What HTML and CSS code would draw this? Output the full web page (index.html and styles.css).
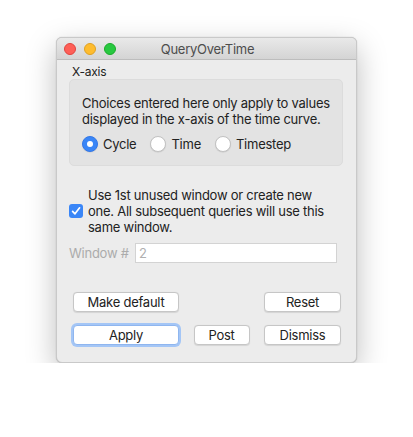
FILE: index.html
```html
<!DOCTYPE html>
<html>
<head>
<meta charset="utf-8">
<link rel="stylesheet" href="styles.css">
</head>
<body>
<div class="window">
  <div class="titlebar">
    <div class="lights">
      <span class="light red"></span>
      <span class="light yellow"></span>
      <span class="light green"></span>
    </div>
    <div class="title">QueryOverTime</div>
  </div>
  <div class="content">
    <div class="grouplabel">X-axis</div>
    <div class="group">
      <div class="desc">Choices entered here only apply to values displayed in the x-axis of the time curve.</div>
      <div class="radios">
        <label class="radio"><span class="rb checked"></span><span>Cycle</span></label>
        <label class="radio"><span class="rb"></span><span>Time</span></label>
        <label class="radio"><span class="rb"></span><span>Timestep</span></label>
      </div>
    </div>
    <div class="checkrow">
      <span class="cb"><svg width="10" height="10" viewBox="0 0 10 10"><path d="M1.6 5.3 L4 7.8 L8.6 1.8" fill="none" stroke="#fff" stroke-width="1.7" stroke-linecap="round" stroke-linejoin="round"/></svg></span>
      <div class="checktext">Use 1st unused window or create new one. All subsequent queries will use this same window.</div>
    </div>
    <div class="winrow">
      <span class="winlabel">Window #</span>
      <div class="input">2</div>
    </div>
    <div class="btnrow first">
      <div class="btn w106">Make default</div>
      <div class="btn w77">Reset</div>
    </div>
    <div class="btnrow second">
      <div class="btn w106 focus">Apply</div>
      <div class="btn w56">Post</div>
      <div class="btn w77">Dismiss</div>
    </div>
  </div>
</div>
</body>
</html>
```

FILE: styles.css
```css
html, body {
  margin: 0;
  padding: 0;
  background: #ffffff;
}
body {
  font-family: Inter, "Noto Sans", sans-serif;
  font-size: 13px;
  letter-spacing: -0.25px;
  color: #262626;
  padding: 37px 0 0 56px;
}
.window {
  width: 301px;
  height: 326px;
  box-sizing: border-box;
  border-radius: 6px;
  border: 1px solid #c9c9c9;
  background: #ececec;
  box-shadow: 0 10px 30px rgba(0,0,0,0.26), 0 0 1px rgba(0,0,0,0.3);
  overflow: hidden;
  display: flex;
  flex-direction: column;
}
.titlebar {
  height: 21px;
  flex: none;
  background: linear-gradient(#e9e9e9, #d4d4d4);
  border-bottom: 1px solid #bdbdbd;
  display: flex;
  align-items: center;
  position: relative;
}
.lights {
  display: flex;
  gap: 8px;
  padding-left: 7px;
}
.light {
  width: 12px;
  height: 12px;
  border-radius: 50%;
  box-sizing: border-box;
}
.red { background: #fe5f57; border: 0.5px solid #e0443e; }
.yellow { background: #febc2e; border: 0.5px solid #dea123; }
.green { background: #28c840; border: 0.5px solid #1aab29; }
.title {
  position: absolute;
  left: 0;
  right: 0;
  top: 0;
  bottom: 0;
  display: flex;
  align-items: center;
  justify-content: center;
  color: #4d4d4d;
  font-size: 13px;
  padding-left: 2px;
}
.content {
  flex: 1;
  display: flex;
  flex-direction: column;
  padding: 0 13px 0 12px;
}
.grouplabel {
  font-size: 12px;
  line-height: 14px;
  margin-top: 5px;
  padding-left: 3px;
  color: #222;
}
.group {
  height: 87px;
  box-sizing: border-box;
  background: #e3e3e3;
  border: 1px solid #dcdcdc;
  border-radius: 5px;
  padding: 15px 8px 0 12px;
}
.desc {
  line-height: 16px;
  color: #222;
}
.radios {
  display: flex;
  margin-top: 9px;
  gap: 14px;
}
.radio {
  display: flex;
  align-items: center;
  gap: 5px;
  color: #222;
}
.rb {
  width: 16px;
  height: 16px;
  box-sizing: border-box;
  border-radius: 50%;
  background: #fff;
  border: 1px solid #c2c2c2;
  box-shadow: 0 0.5px 1px rgba(0,0,0,0.12);
  position: relative;
}
.rb.checked {
  background: #3a86f7;
  border-color: #3478e8;
}
.rb.checked::after {
  content: "";
  position: absolute;
  left: 4px;
  top: 4px;
  width: 6px;
  height: 6px;
  border-radius: 50%;
  background: #fff;
}
.checkrow {
  display: flex;
  align-items: center;
  margin-top: 21px;
}
.cb {
  width: 14px;
  height: 14px;
  flex: none;
  border-radius: 3px;
  background: #3a86f7;
  display: flex;
  align-items: center;
  justify-content: center;
  margin-right: 5px;
}
.checktext {
  line-height: 16px;
  color: #222;
  width: 250px;
}
.winrow {
  display: flex;
  align-items: center;
  margin-top: 8px;
}
.winlabel {
  color: #ababab;
  width: 66px;
  padding-left: 0px;
}
.input {
  width: 202px;
  height: 20px;
  box-sizing: border-box;
  background: #fff;
  border: 1px solid #d3d3d3;
  color: #b0b0b0;
  padding-left: 3px;
  line-height: 18px;
}
.btnrow {
  display: flex;
  justify-content: space-between;
  padding: 0 2px 0 4px;
}
.btnrow.first { margin-top: 29px; }
.btnrow.second { margin-top: 13px; }
.btn {
  height: 20px;
  box-sizing: border-box;
  background: #fff;
  border: 1px solid #c6c6c6;
  border-radius: 4px;
  box-shadow: 0 0.5px 1px rgba(0,0,0,0.1);
  display: flex;
  align-items: center;
  justify-content: center;
  color: #222;
}
.w106 { width: 106px; }
.w77 { width: 77px; }
.w56 { width: 56px; }
.btn.focus {
  border-color: #8fb6ef;
  box-shadow: 0 0 0 2px #a4c6f6;
}
```
